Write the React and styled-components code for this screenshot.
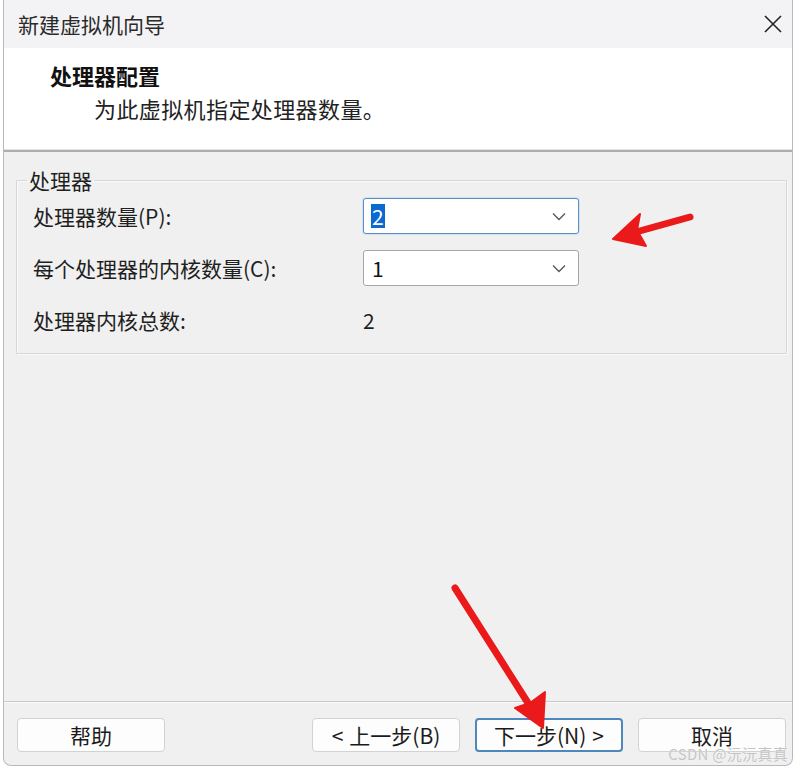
import React from "react";
import styled, { createGlobalStyle } from "styled-components";

const Global = createGlobalStyle`
  html, body { margin: 0; padding: 0; background: #ffffff; }
  body { font-family: "Noto Sans CJK SC", "Noto Sans", sans-serif; color: #1b1b1b; }
  * { box-sizing: border-box; }
`;

const Page = styled.div`
  position: relative;
  width: 800px;
  height: 769px;
  padding-left: 3px;
  padding-right: 7px;
  overflow: hidden;
`;

const Window = styled.div`
  height: 766px;
  display: flex;
  flex-direction: column;
  border: 1px solid #b9b9b9;
  border-top: none;
  border-bottom-left-radius: 8px;
  border-bottom-right-radius: 8px;
  background: #f0f0f0;
  overflow: hidden;
`;

const TitleBar = styled.div`
  height: 48px;
  display: flex;
  align-items: center;
  justify-content: space-between;
  padding: 0 10px 0 14px;
  background: #f3f3f6;
  font-size: 21px;
  color: #2a2a2a;
`;

const CloseIcon = styled.svg`
  width: 18px;
  height: 18px;
`;

const Header = styled.div`
  background: #ffffff;
  padding: 12px 0 0 46px;
  height: 104px;
  border-bottom: 2px solid #adadad;
  box-shadow: inset 0 -5px 0 -4px #e4e4e4;
`;

const Heading = styled.div`
  font-size: 22px;
  font-weight: 700;
  line-height: 30px;
  color: #111;
`;

const SubHeading = styled.div`
  font-size: 22px;
  line-height: 30px;
  margin: 3px 0 0 44px;
  letter-spacing: 0.4px;
  color: #222;
`;

const Body = styled.div`
  flex: 1;
  padding-top: 16px;
`;

const GroupBox = styled.fieldset`
  margin: 0 5px 0 12px;
  padding: 6px 0 15px 16px;
  border: 1px solid #d6d6d6;
  box-shadow: inset 1px 1px 0 #fafafa, 1px 1px 0 #fafafa;
  border-radius: 1px;
  min-width: 0;
`;

const Legend = styled.legend`
  font-size: 21px;
  line-height: 24px;
  padding: 0 2px;
  margin-left: -6px;
  color: #1f1f1f;
`;

const Grid = styled.div`
  display: grid;
  grid-template-columns: 330px 216px;
  row-gap: 16px;
  align-items: center;
`;

const Label = styled.div`
  font-size: 21px;
  line-height: 36px;
  height: 36px;
  color: #1f1f1f;
`;

const Value = styled.div`
  font-size: 21px;
  line-height: 36px;
  color: #1f1f1f;
`;

const Select = styled.div`
  height: 36px;
  display: flex;
  align-items: center;
  justify-content: space-between;
  padding: 0 12px 0 7px;
  background: #ffffff;
  border-radius: 3px;
  border: 1px solid ${(p) => (p.$focused ? "#5b8fc4" : "#a6a6a6")};
  box-shadow: ${(p) => (p.$focused ? "0 0 0 1px #cfe3f5" : "none")};
  font-size: 21px;
  color: #111;
`;

const Selected = styled.span`
  background: ${(p) => (p.$highlight ? "#0a6ad0" : "transparent")};
  color: ${(p) => (p.$highlight ? "#fff" : "#111")};
  line-height: 24px;
  padding: 0 1px;
`;

const Chevron = styled.svg`
  width: 14px;
  height: 9px;
`;

const Footer = styled.div`
  height: 64px;
  display: flex;
  align-items: flex-start;
  padding: 16px 6px 0 13px;
  border-top: 1px solid #c9c9c9;
  box-shadow: inset 0 1px 0 #fbfbfb;
`;

const Spacer = styled.div`
  flex: 1;
`;

const ButtonGroup = styled.div`
  display: flex;
  gap: 15px;
`;

const Button = styled.div`
  width: 148px;
  height: 34px;
  display: flex;
  align-items: center;
  justify-content: center;
  gap: 6px;
  background: #fdfdfd;
  border: ${(p) => (p.$primary ? "2px solid #4f86bd" : "1px solid #d2d2d2")};
  border-radius: 4px;
  font-size: 21px;
  color: #1b1b1b;
  white-space: nowrap;
`;

const Overlay = styled.svg`
  position: absolute;
  left: 0;
  top: 0;
  width: 800px;
  height: 769px;
  pointer-events: none;
`;

const Watermark = styled.div`
  position: absolute;
  right: 12px;
  bottom: 5px;
  font-family: "Noto Sans CJK SC", "Noto Sans", sans-serif;
  font-size: 15px;
  color: #c4c4c4;
  letter-spacing: 0.3px;
  text-shadow: 0 0 1px #fff;
`;

function ChevronDown() {
  return (
    <Chevron viewBox="0 0 14 9">
      <path d="M1 1.5 L7 7.5 L13 1.5" fill="none" stroke="#555" strokeWidth="1.3" />
    </Chevron>
  );
}

export default function App() {
  return (
    <>
      <Global />
      <Page>
        <Window>
          <TitleBar>
            <span>新建虚拟机向导</span>
            <CloseIcon viewBox="0 0 18 18">
              <path d="M1 1 L17 17 M17 1 L1 17" stroke="#222" strokeWidth="1.6" fill="none" />
            </CloseIcon>
          </TitleBar>
          <Header>
            <Heading>处理器配置</Heading>
            <SubHeading>为此虚拟机指定处理器数量。</SubHeading>
          </Header>
          <Body>
            <GroupBox>
              <Legend>处理器</Legend>
              <Grid>
                <Label>处理器数量(P):</Label>
                <Select $focused>
                  <Selected $highlight>2</Selected>
                  <ChevronDown />
                </Select>
                <Label>每个处理器的内核数量(C):</Label>
                <Select>
                  <Selected>1</Selected>
                  <ChevronDown />
                </Select>
                <Label>处理器内核总数:</Label>
                <Value>2</Value>
              </Grid>
            </GroupBox>
          </Body>
          <Footer>
            <Button>帮助</Button>
            <Spacer />
            <ButtonGroup>
              <Button>
                <span>&lt;</span>
                <span>上一步(B)</span>
              </Button>
              <Button $primary>
                <span>下一步(N)</span>
                <span>&gt;</span>
              </Button>
              <Button>取消</Button>
            </ButtonGroup>
          </Footer>
        </Window>
        <Overlay viewBox="0 0 800 769">
          <g fill="#ea1a1a" stroke="#ea1a1a" strokeLinecap="round" strokeLinejoin="round">
            <line x1="690" y1="217" x2="636" y2="232" strokeWidth="7" />
            <polygon points="613,239 640,214 637,230 646,246" strokeWidth="2" />
            <line x1="455" y1="588" x2="528" y2="703" strokeWidth="7" />
            <polygon points="543,728 515,708 530,703 545,692" strokeWidth="2" />
          </g>
        </Overlay>
        <Watermark>CSDN @沅沅真真</Watermark>
      </Page>
    </>
  );
}
